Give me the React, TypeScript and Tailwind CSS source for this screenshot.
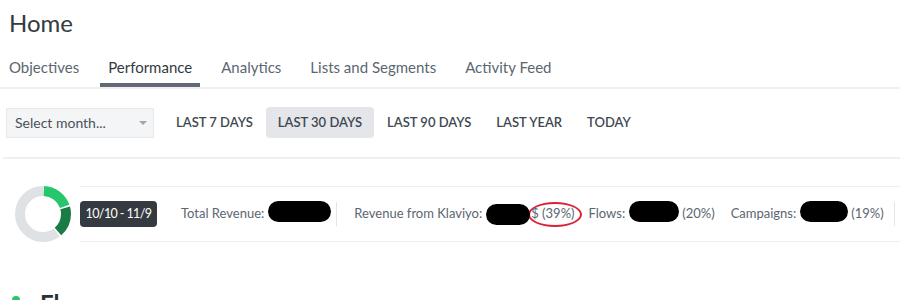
import React from 'react';

const tabs = ['Objectives', 'Performance', 'Analytics', 'Lists and Segments', 'Activity Feed'];
const ranges = ['LAST 7 DAYS', 'LAST 30 DAYS', 'LAST 90 DAYS', 'LAST YEAR', 'TODAY'];

const C = 2 * Math.PI * 23;

function Arc({ start, len, color }: { start: number; len: number; color: string }) {
  return (
    <circle
      cx="28"
      cy="28"
      r="23"
      fill="none"
      stroke={color}
      strokeWidth="10"
      strokeDasharray={`${len} ${C - len}`}
      strokeDashoffset={-start}
      transform="rotate(-90 28 28)"
    />
  );
}

function Donut() {
  const flows = C * 0.2;
  const camps = C * 0.19;
  const gap = 1.5;
  return (
    <svg width="56" height="56" viewBox="0 0 56 56" className="shrink-0">
      <Arc start={gap / 2} len={flows - gap} color="#25c66c" />
      <Arc start={flows + gap / 2} len={camps - gap} color="#1a7b46" />
      <Arc start={flows + camps + gap / 2} len={C - flows - camps - gap} color="#dfe2e5" />
    </svg>
  );
}

function Pill({ w }: { w: string }) {
  return <span className={`${w} relative z-10 inline-block h-[21px] rounded-full bg-black`} />;
}

export default function App() {
  return (
    <div className="w-[900px] h-[300px] overflow-hidden bg-white font-['Lato','Open_Sans',sans-serif] text-[#5b6670]">
      {/* title */}
      <h1 className="pl-[9px] pt-[7px] text-[24px] leading-[32px] text-[#333a40]">Home</h1>

      {/* tabs */}
      <nav className="mt-[18px] flex gap-[13px] border-b-2 border-[#f0f0f0] pl-[1px]">
        {tabs.map((t) => (
          <div
            key={t}
            className={`px-2 pb-[6px] text-[15px] leading-[20px] border-b-4 ${
              t === 'Performance' ? 'border-[#5f6a76] text-[#333a40]' : 'border-transparent'
            }`}
          >
            {t}
          </div>
        ))}
      </nav>

      {/* date filters */}
      <div className="mt-[18px] flex items-center gap-[1px] pl-[6px]">
        <div className="mr-[9px] flex h-[30px] w-[148px] items-center justify-between border border-[#e6e8ea] bg-[#f4f5f6] pl-[8px] pr-[6px] text-[14px] text-[#4a525a]">
          <span>Select month...</span>
          <span className="h-0 w-0 border-x-[4px] border-t-[4px] border-x-transparent border-t-[#a0a6ac]" />
        </div>
        {ranges.map((r) => (
          <div
            key={r}
            className={`flex h-[31px] items-center rounded-sm px-3 text-[13px] font-semibold text-[#3e4852] ${
              r === 'LAST 30 DAYS' ? 'bg-[#e4e6e9]' : ''
            }`}
          >
            {r}
          </div>
        ))}
      </div>

      <div className="ml-[3px] mt-[19px] h-[2px] bg-[#efefef]" />

      {/* stats bar */}
      <div className="mt-[27px] flex items-center pl-[15px]">
        <Donut />
        <div className="ml-[9px] flex h-[56px] flex-1 items-center whitespace-nowrap border-y border-[#efefef] text-[13px]">
          <span className="flex h-[26px] w-[77px] items-center justify-center rounded-sm bg-[#343a40] text-[12.5px] tracking-[-0.6px] text-white">
            10/10 - 11/9
          </span>

          <span className="ml-[24px]">Total Revenue:</span>
          <span className="ml-[4px]"><Pill w="w-[63px]" /></span>
          <span className="ml-[5px] h-[24px] w-px bg-[#e4e4e4]" />

          <span className="ml-[17px]">Revenue from Klaviyo:</span>
          <span className="ml-[4px] flex items-center">
            <Pill w="w-[44px]" />
            <span className="-ml-[2px] flex h-[25px] items-center rounded-[50%] border-2 border-[#dc2238] pl-[1px] pr-[5px]">
              $ (39%)
            </span>
          </span>

          <span className="ml-[7px]">Flows:</span>
          <span className="ml-[4px]"><Pill w="w-[50px]" /></span>
          <span className="ml-[3px]">(20%)</span>

          <span className="ml-[16px]">Campaigns:</span>
          <span className="ml-[4px]"><Pill w="w-[48px]" /></span>
          <span className="ml-[3px]">(19%)</span>
          <span className="ml-[10px] h-[24px] w-px bg-[#e4e4e4]" />
        </div>
      </div>

      {/* flows section header */}
      <div className="mt-[46px] flex items-start gap-[20px] pl-[12px]">
        <span className="mt-[8px] h-[8px] w-[8px] shrink-0 rounded-full bg-[#25c66c]" />
        <span className="text-[24px] font-bold leading-[32px] text-[#2b3036]">Flows</span>
      </div>
    </div>
  );
}
